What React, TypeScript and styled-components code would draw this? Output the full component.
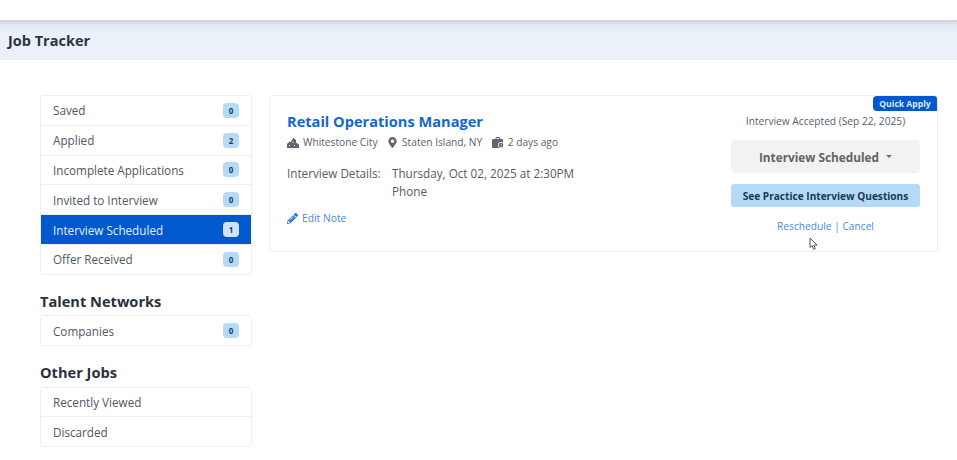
import styled, { createGlobalStyle } from 'styled-components'
import { FaMapMarkerAlt, FaPencilAlt } from 'react-icons/fa'

const Global = createGlobalStyle`
  html, body {
    margin: 0;
    background: #fff;
    font-family: 'Open Sans', 'Liberation Sans', sans-serif;
  }
`

const Page = styled.div`
  position: relative;
  width: 957px;
  height: 460px;
  overflow: hidden;
  background: #fff;
`

const TopGap = styled.div`
  height: 20px;
`

const TitleBar = styled.div`
  height: 40px;
  display: flex;
  align-items: center;
  padding-left: 8px;
  background: linear-gradient(#c9d0da 0, #e3e9f1 5px, #ebf1f9 13px, #ebf1f9 100%);
`

const Title = styled.h1`
  margin: 0;
  font-size: 14.5px;
  font-weight: 700;
  color: #2c3440;
`

const Main = styled.div`
  display: flex;
  align-items: flex-start;
  gap: 17px;
  padding: 35px 19px 0 40px;
`

const Sidebar = styled.div`
  width: 212px;
  flex: none;
`

const List = styled.div`
  border: 1px solid #eceef1;
  border-radius: 3px;
  overflow: hidden;
`

const Row = styled.div<{ $active?: boolean }>`
  height: 28.8px;
  display: flex;
  align-items: center;
  justify-content: space-between;
  padding: 0 12px;
  font-size: 11.7px;
  color: ${p => (p.$active ? '#e4effc' : '#515760')};
  background: ${p => (p.$active ? '#0158cf' : '#fff')};
  & + & {
    border-top: 1px solid #eceef1;
  }
`

const Count = styled.span<{ $active?: boolean }>`
  width: 16px;
  height: 15px;
  display: flex;
  align-items: center;
  justify-content: center;
  border-radius: 4px;
  font-size: 8px;
  font-weight: 700;
  color: #1b3a5e;
  background: ${p => (p.$active ? '#cfe4fa' : '#b5daf8')};
`

const SectionTitle = styled.h2`
  margin: 16px 0 4.5px;
  font-size: 14.6px;
  line-height: 20px;
  font-weight: 700;
  color: #28303c;
`

const Card = styled.div`
  position: relative;
  flex: 1;
  height: 157px;
  box-sizing: border-box;
  display: flex;
  justify-content: space-between;
  padding: 15px 17px 0 17px;
  border: 1px solid #eceef1;
  border-radius: 4px;
`

const Badge = styled.div`
  position: absolute;
  top: 0;
  right: 0;
  width: 64px;
  height: 15px;
  display: flex;
  align-items: center;
  justify-content: center;
  border-radius: 4px 3px 0 4px;
  background: #0158cf;
  color: #dcebfb;
  font-size: 8.6px;
  font-weight: 700;
`

const JobInfo = styled.div`
  display: flex;
  flex-direction: column;
`

const JobTitle = styled.div`
  font-size: 14.6px;
  line-height: 20px;
  font-weight: 700;
  color: #1467cf;
`

const Meta = styled.div`
  display: flex;
  align-items: center;
  margin-top: 3px;
  height: 16px;
  font-size: 10.2px;
  color: #5a6069;
`

const MetaItem = styled.span`
  display: flex;
  align-items: center;
  gap: 4px;
  margin-right: 9.5px;
  svg {
    color: #5f6670;
  }
`

const Details = styled.div`
  display: flex;
  margin-top: 14px;
  font-size: 11.7px;
  line-height: 18px;
  color: #565c65;
`

const DetailsLabel = styled.div`
  width: 105px;
`

const EditNote = styled.div`
  display: flex;
  align-items: center;
  gap: 4px;
  margin-top: 11px;
  font-size: 10.3px;
  color: #4a8ad8;
  svg {
    font-size: 11px;
    color: #2f78d2;
  }
`

const Actions = styled.div`
  width: 189px;
  padding-top: 2px;
  display: flex;
  flex-direction: column;
  align-items: stretch;
  text-align: center;
`

const Accepted = styled.div`
  font-size: 10.2px;
  line-height: 16px;
  color: #56606c;
  white-space: nowrap;
`

const StatusSelect = styled.div`
  height: 33px;
  margin-top: 11px;
  display: flex;
  align-items: center;
  justify-content: center;
  gap: 7px;
  border-radius: 4px;
  background: #f2f2f3;
  font-size: 11.8px;
  font-weight: 700;
  color: #5f6368;
`

const Caret = styled.span`
  width: 0;
  height: 0;
  border-left: 3px solid transparent;
  border-right: 3px solid transparent;
  border-top: 3px solid #6a6e74;
`

const PracticeButton = styled.div`
  height: 23px;
  margin-top: 11px;
  display: flex;
  align-items: center;
  justify-content: center;
  border-radius: 3px;
  background: #b5daf8;
  font-size: 10.1px;
  font-weight: 700;
  color: #1c3856;
`

const Links = styled.div`
  margin-top: 11px;
  font-size: 10.2px;
  line-height: 16px;
  color: #4a8ad8;
`

const Pointer = styled.svg`
  position: absolute;
  left: 809px;
  top: 237px;
`

const counts = [
  ['Saved', 0],
  ['Applied', 2],
  ['Incomplete Applications', 0],
  ['Invited to Interview', 0],
  ['Interview Scheduled', 1],
  ['Offer Received', 0],
] as const

function CityIcon() {
  return (
    <svg width="12" height="11" viewBox="0 0 12 11">
      <path
        fill="currentColor"
        d="M0 11V7L2.5 4.5 4 5 6.2 .8 9 3V5.5L12 7.5V11Z"
      />
      <path fill="#fff" d="M2 8h1v1H2zM5.5 5h1v1h-1zM7 8h1v1H7z" />
    </svg>
  )
}

function BagClockIcon() {
  return (
    <svg width="12" height="11" viewBox="0 0 12 11">
      <path
        fill="currentColor"
        d="M3.5 2V1q0-1 1-1h2.5q1 0 1 1v1H10q1 0 1 1v7q0 1-1 1H1q-1 0-1-1V3q0-1 1-1ZM4.6 2h2.3V1H4.6Z"
      />
      <circle cx="9" cy="8" r="3" fill="#fff" />
      <circle cx="9" cy="8" r="2.3" fill="currentColor" />
      <path d="M9 6.8V8l.9.6" fill="none" stroke="#fff" strokeWidth=".6" />
    </svg>
  )
}

export default function App() {
  return (
    <Page>
      <Global />
      <TopGap />
      <TitleBar>
        <Title>Job Tracker</Title>
      </TitleBar>
      <Main>
        <Sidebar>
          <List>
            {counts.map(([label, n]) => (
              <Row key={label} $active={label === 'Interview Scheduled'}>
                {label}
                <Count $active={label === 'Interview Scheduled'}>{n}</Count>
              </Row>
            ))}
          </List>
          <SectionTitle>Talent Networks</SectionTitle>
          <List>
            <Row>
              Companies
              <Count>0</Count>
            </Row>
          </List>
          <SectionTitle>Other Jobs</SectionTitle>
          <List>
            <Row>Recently Viewed</Row>
            <Row>Discarded</Row>
          </List>
        </Sidebar>
        <Card>
          <Badge>Quick Apply</Badge>
          <JobInfo>
            <JobTitle>Retail Operations Manager</JobTitle>
            <Meta>
              <MetaItem><CityIcon />Whitestone City</MetaItem>
              <MetaItem><FaMapMarkerAlt size={11} />Staten Island, NY</MetaItem>
              <MetaItem><BagClockIcon />2 days ago</MetaItem>
            </Meta>
            <Details>
              <DetailsLabel>Interview Details:</DetailsLabel>
              <div>
                Thursday, Oct 02, 2025 at 2:30PM
                <br />
                Phone
              </div>
            </Details>
            <EditNote><FaPencilAlt />Edit Note</EditNote>
          </JobInfo>
          <Actions>
            <Accepted>Interview Accepted (Sep 22, 2025)</Accepted>
            <StatusSelect>Interview Scheduled <Caret /></StatusSelect>
            <PracticeButton>See Practice Interview Questions</PracticeButton>
            <Links>Reschedule | Cancel</Links>
          </Actions>
        </Card>
      </Main>
      <Pointer width="10" height="14" viewBox="0 0 10 14">
        <path d="M1 1 L1 10.5 L3.2 8.6 L4.8 12.4 L6.4 11.7 L4.9 8.2 L8 8 Z" fill="#fff" stroke="#555" strokeWidth="1" />
      </Pointer>
    </Page>
  )
}
